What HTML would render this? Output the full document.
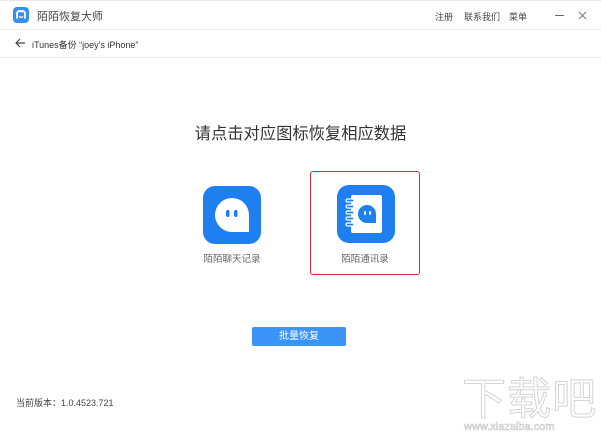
<!DOCTYPE html>
<html><head><meta charset="utf-8"><style>
*{margin:0;padding:0;box-sizing:border-box}
body{width:601px;height:436px;background:#fff;font-family:"Liberation Sans","Noto Sans CJK SC",sans-serif;position:relative;overflow:hidden;color:#333}
.abs{position:absolute}
</style></head><body>
<div class="abs" style="left:0;top:0;width:601px;height:1px;background:#e8e8e8"></div>
<svg class="abs" style="left:13px;top:7px" width="16" height="16" viewBox="0 0 16 16"><rect width="16" height="16" rx="4" fill="#3a8ef0"/><path d="M4 11V6.5a2.5 2.5 0 0 1 4-2 2.5 2.5 0 0 1 4 2V11" fill="none" stroke="#fff" stroke-width="1.8" stroke-linecap="round"/><path d="M6 9.5q2 1.5 4 0" fill="none" stroke="#fff" stroke-width="1.4"/></svg>
<div class="abs" style="left:37px;top:8px;font-size:11px;color:#444">陌陌恢复大师</div>
<div class="abs" style="left:435px;top:10px;font-size:9px;color:#444">注册</div>
<div class="abs" style="left:464px;top:10px;font-size:9px;color:#444">联系我们</div>
<div class="abs" style="left:509px;top:10px;font-size:9px;color:#444">菜单</div>
<div class="abs" style="left:555px;top:15px;width:9px;height:1px;background:#666"></div>
<svg class="abs" style="left:578px;top:11px" width="9" height="9" viewBox="0 0 9 9"><path d="M1 1l7 7M8 1L1 8" stroke="#777" stroke-width="1"/></svg>
<div class="abs" style="left:0;top:29px;width:601px;height:1px;background:#eaeaea"></div>
<svg class="abs" style="left:15px;top:38px" width="11" height="10" viewBox="0 0 11 10"><path d="M10 5H1.5M5 1L1 5l4 4" fill="none" stroke="#444" stroke-width="1.2"/></svg>
<div class="abs" style="left:32px;top:38px;font-size:9px;color:#333">iTunes备份 “joey's iPhone”</div>
<div class="abs" style="left:0;top:57px;width:601px;height:1px;background:#eaeaea"></div>
<div class="abs" style="left:0;top:120px;width:601px;text-align:center;font-size:16.3px;color:#333">请点击对应图标恢复相应数据</div>
<svg class="abs" style="left:203px;top:186px" width="58" height="58" viewBox="0 0 58 58"><rect width="58" height="58" rx="12" fill="#1e7ff0"/><path d="M29 12a17 17 0 0 0 0 34h17V29a17 17 0 0 0-17-17z" fill="#fff"/><rect x="23" y="24" width="3.5" height="7" rx="1.7" fill="#1e7ff0"/><rect x="31" y="24" width="3.5" height="7" rx="1.7" fill="#1e7ff0"/></svg>
<div class="abs" style="left:197px;top:251px;width:70px;text-align:center;font-size:9.5px;color:#666">陌陌聊天记录</div>
<div class="abs" style="left:310px;top:171px;width:110px;height:104px;border:1.3px solid #d9273a;border-radius:3px"></div>
<svg class="abs" style="left:337px;top:185px" width="58" height="58" viewBox="0 0 58 58"><rect width="58" height="58" rx="12" fill="#1e7ff0"/><rect x="14" y="10" width="31" height="38" rx="2" fill="#fff"/><g fill="#1e7ff0" stroke="#fff" stroke-width="1.2"><rect x="9" y="14" width="8" height="3" rx="1.5"/><rect x="9" y="20" width="8" height="3" rx="1.5"/><rect x="9" y="26" width="8" height="3" rx="1.5"/><rect x="9" y="32" width="8" height="3" rx="1.5"/><rect x="9" y="38" width="8" height="3" rx="1.5"/></g><path d="M30 20a9 9 0 0 0 0 18h9v-9a9 9 0 0 0-9-9z" fill="#1e7ff0"/><rect x="27" y="26" width="2" height="4" rx="1" fill="#fff"/><rect x="32" y="26" width="2" height="4" rx="1" fill="#fff"/></svg>
<div class="abs" style="left:330px;top:251px;width:70px;text-align:center;font-size:9.5px;color:#666">陌陌通讯录</div>
<div class="abs" style="left:252px;top:327px;width:94px;height:19px;background:#3a93f7;border-radius:2px;color:#fff;font-size:10px;text-align:center;line-height:19px">批量恢复</div>
<div class="abs" style="left:16px;top:396px;font-size:9px;color:#444">当前版本：1.0.4523.721</div>
<div class="abs" style="left:462px;top:375px;font-size:44px;color:#fff;-webkit-text-stroke:1px #d4d4d4;letter-spacing:1px;line-height:50px">下载吧</div>
<div class="abs" style="left:464px;top:421px;font-size:11px;color:#fff;-webkit-text-stroke:0.6px #c8c8c8">www.xiazaiba.com</div>
</body></html>
